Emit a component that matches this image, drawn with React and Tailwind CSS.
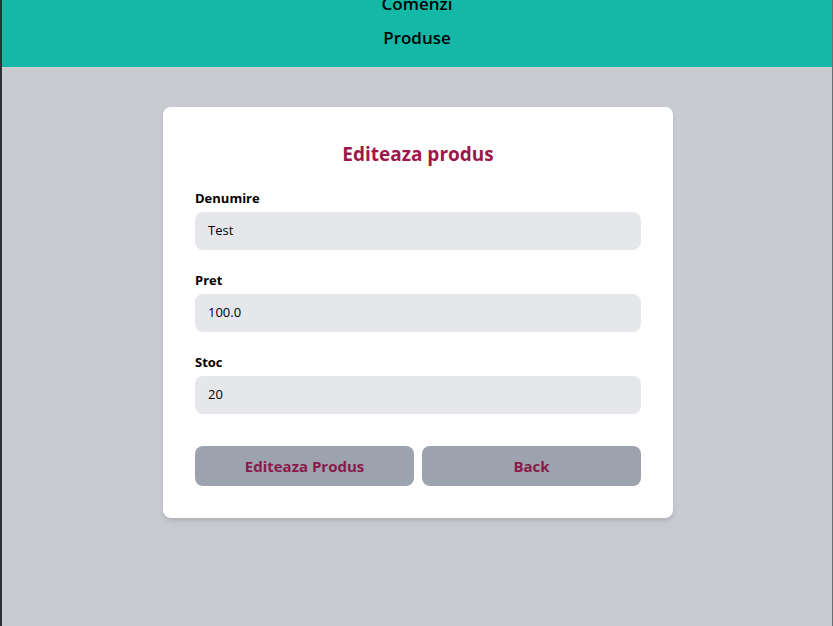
export default function App() {
  const font = { fontFamily: '"Open Sans", "Noto Sans", sans-serif' };
  return (
    <div className="flex min-h-[626px] w-full bg-[#3a3b3d]" style={font}>
      <div className="w-[2px] shrink-0 bg-[#2f3033]" />
      <div className="flex flex-1 flex-col bg-[#c8cbd0]">
        <header className="h-[67px] overflow-hidden bg-[#13b8a6]">
          <ul className="mt-[-10px] flex flex-col items-center gap-[6px] text-[17px] font-semibold leading-[28px] text-black">
            <li>Comenzi</li>
            <li>Produse</li>
          </ul>
        </header>
        <main className="flex justify-center pt-[40px]">
          <div className="ml-[2px] w-[510px] rounded-lg bg-white px-8 pb-8 pt-[33px] shadow-md">
            <h2 className="mb-5 text-center text-[19px] font-bold leading-[28px] text-[#9d174d]">
              Editeaza produs
            </h2>
            <div className="mb-5">
              <label className="mb-1 block text-[13px] font-bold leading-5 text-black">Denumire</label>
              <div className="flex h-[38px] items-center rounded-lg bg-[#e5e7eb] px-[13px] text-[13px] text-black">Test</div>
            </div>
            <div className="mb-5">
              <label className="mb-1 block text-[13px] font-bold leading-5 text-black">Pret</label>
              <div className="flex h-[38px] items-center rounded-lg bg-[#e5e7eb] px-[13px] text-[13px] text-black">100.0</div>
            </div>
            <div>
              <label className="mb-1 block text-[13px] font-bold leading-5 text-black">Stoc</label>
              <div className="flex h-[38px] items-center rounded-lg bg-[#e5e7eb] px-[13px] text-[13px] text-black">20</div>
            </div>
            <div className="mt-8 flex gap-2">
              <button className="h-10 flex-1 rounded-lg bg-[#9ca3af] text-[15px] font-bold text-[#8b1a4b]">Editeaza Produs</button>
              <button className="h-10 flex-1 rounded-lg bg-[#9ca3af] text-[15px] font-bold text-[#8b1a4b]">Back</button>
            </div>
          </div>
        </main>
      </div>
      <div className="w-px shrink-0 bg-[#6b6d70]" />
    </div>
  );
}
